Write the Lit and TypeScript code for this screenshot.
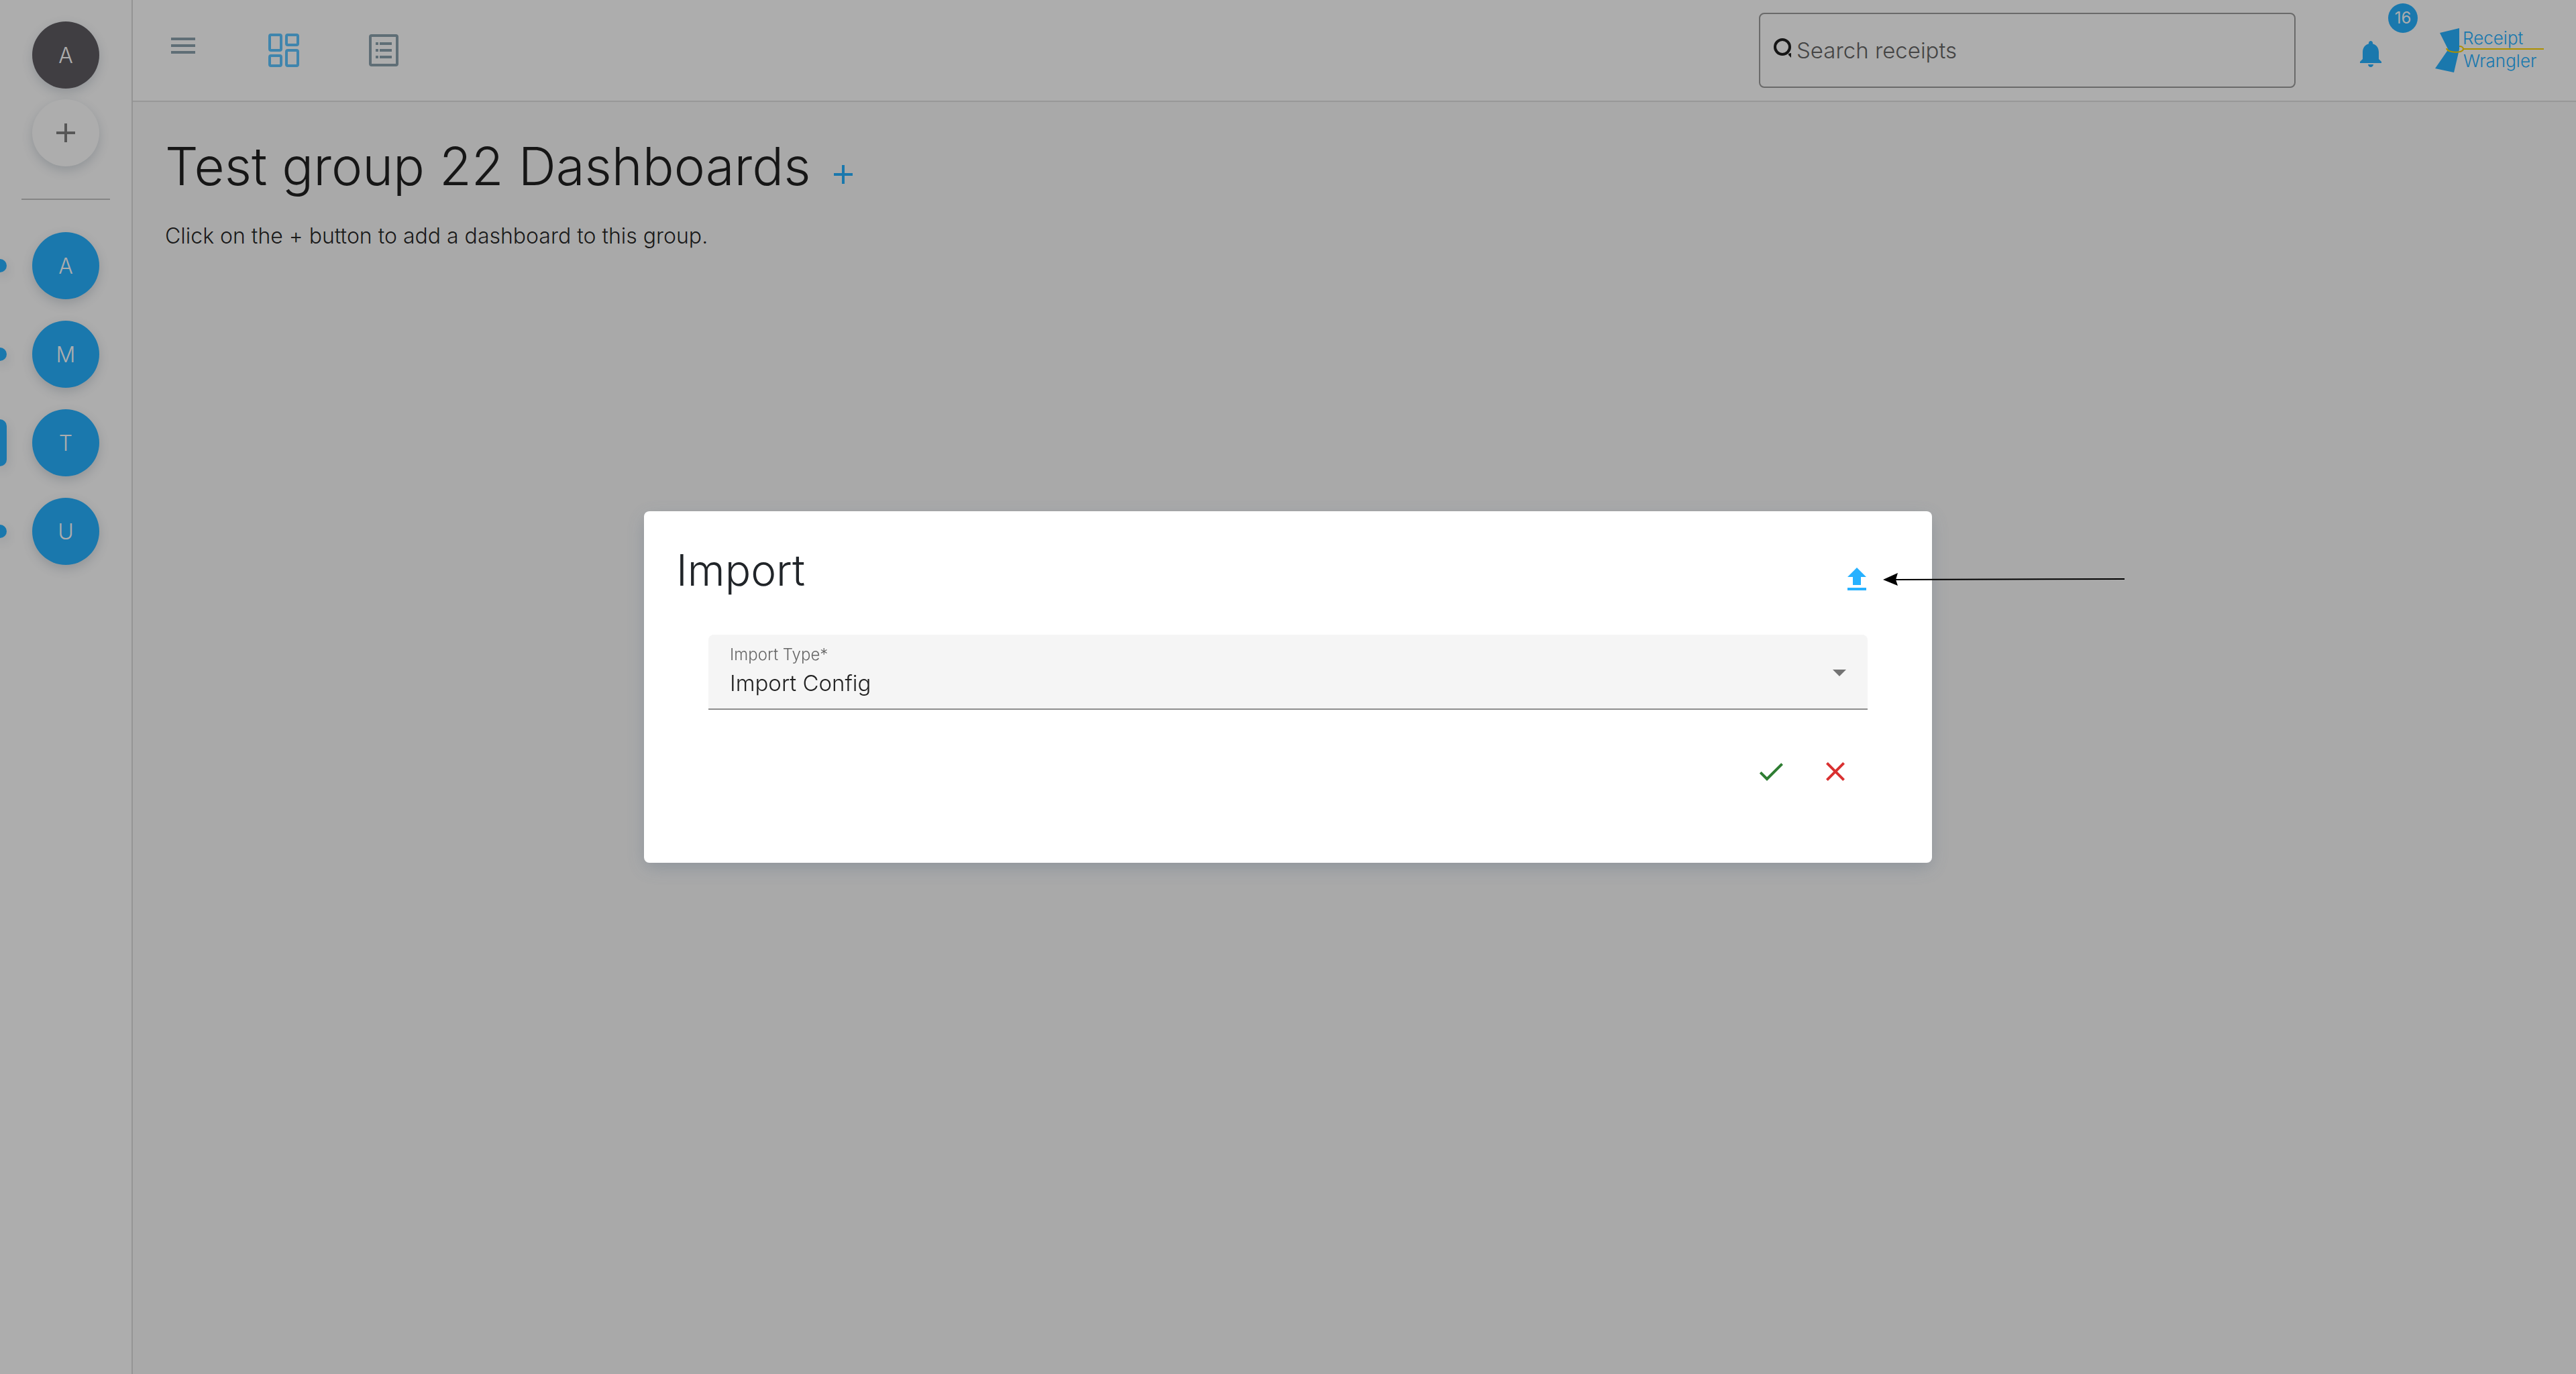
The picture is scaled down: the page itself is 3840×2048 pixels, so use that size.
import { LitElement, html, css, svg } from "lit";
import { customElement, property, state } from "lit/decorators.js";
import { classMap } from "lit/directives/class-map.js";

const paths = {
  menu: "M3 18h18v-2H3v2zm0-5h18v-2H3v2zm0-7v2h18V6H3z",
  add: "M19 13h-6v6h-2v-6H5v-2h6V5h2v6h6v2z",
  bell: "M12 22c1.1 0 2-.9 2-2h-4c0 1.1.89 2 2 2zm6-6v-5c0-3.07-1.64-5.64-4.5-6.32V4c0-.83-.67-1.5-1.5-1.5s-1.5.67-1.5 1.5v.68C7.63 5.36 6 7.92 6 11v5l-2 2v1h16v-1l-2-2z",
  upload: "M9 16h6v-6h4l-7-7-7 7h4zm-4 2h14v2H5z",
  check: "M9 16.17L4.83 12l-1.42 1.41L9 19 21 7l-1.41-1.41z",
  close: "M19 6.41L17.59 5 12 10.59 6.41 5 5 6.41 10.59 12 5 17.59 6.41 19 12 13.41 17.59 19 19 17.59 13.41 12z",
};

const icon = (name: keyof typeof paths) => html`
  <svg class="icon" viewBox="0 0 24 24" aria-hidden="true"><path fill="currentColor" d=${paths[name]}></path></svg>
`;

const base = css`
  :host {
    display: block;
    box-sizing: border-box;
    font-family: Inter, Lato, sans-serif;
    font-weight: 300;
  }
  *,
  *::before,
  *::after {
    box-sizing: border-box;
  }
  h1,
  h2,
  p,
  ul {
    margin: 0;
    padding: 0;
  }
  button {
    padding: 0;
    border: 0;
    background: none;
    color: inherit;
    font: inherit;
    cursor: pointer;
  }
  svg {
    display: block;
    flex: none;
  }
  .icon {
    width: 48px;
    height: 48px;
  }
  .icon-button {
    display: flex;
    flex: none;
    align-items: center;
    justify-content: center;
    width: 96px;
    height: 96px;
    border-radius: 50%;
    position: relative;
  }
`;

@customElement("group-rail")
export class GroupRail extends LitElement {
  @property({ attribute: false }) groups: string[] = [];
  @property() selected = "";

  static styles = [
    base,
    css`
      :host {
        width: 198px;
        border-right: 2px solid #dadada;
        background: #ffffff;
        padding-top: 32px;
      }
      .top {
        display: flex;
        flex-direction: column;
        align-items: center;
        gap: 16px;
      }
      .avatar {
        width: 100px;
        height: 100px;
        border-radius: 50%;
        display: flex;
        align-items: center;
        justify-content: center;
        font-size: 32px;
        color: #ffffff;
        background: #27b1ff;
        box-shadow: 0 6px 16px rgba(50, 75, 100, 0.2);
      }
      .user {
        background: #5f5c62;
      }
      .new {
        background: #ffffff;
        color: #808080;
      }
      .divider {
        height: 2px;
        border: 0;
        margin: 48px 32px;
        background: #c4c4c4;
      }
      .groups {
        display: flex;
        flex-direction: column;
        gap: 32px;
        list-style: none;
      }
      .group {
        display: flex;
        align-items: center;
        gap: 38px;
      }
      .marker {
        width: 10px;
        height: 20px;
        border-radius: 0 10px 10px 0;
        background: #27b1ff;
        box-shadow: 0 6px 16px rgba(50, 75, 100, 0.2);
      }
      .marker.active {
        height: 70px;
      }
    `,
  ];

  render() {
    return html`
      <div class="top">
        <button class="avatar user" aria-label="Account">A</button>
        <button class="avatar new" aria-label="Add group">${icon("add")}</button>
      </div>
      <hr class="divider" />
      <ul class="groups">
        ${this.groups.map(
          (g) => html`<li class="group">
            <span class=${classMap({ marker: true, active: g === this.selected })}></span>
            <button class="avatar" @click=${() => (this.selected = g)}>${g}</button>
          </li>`
        )}
      </ul>
    `;
  }
}

@customElement("top-bar")
export class TopBar extends LitElement {
  static styles = [
    base,
    css`
      :host {
        background: #ffffff;
        border-bottom: 2px solid #e1e1e1;
      }
      .bar {
        display: flex;
        align-items: center;
        min-height: 150px;
        padding: 0 48px 0 27px;
      }
      .nav {
        display: flex;
        align-items: center;
        gap: 54px;
        color: #8ca2ae;
      }
      .menu {
        margin-bottom: 14px;
      }
      .current {
        color: #5dc5ff;
      }
      .search {
        flex: 0 1 800px;
        min-width: 0;
        height: 112px;
        margin: 0 64px 0 auto;
        padding: 0 20px;
        border: 2px solid #9c9c9c;
        border-radius: 8px;
        display: flex;
        align-items: center;
        gap: 8px;
      }
      .query {
        flex: 1;
        min-width: 0;
        border: 0;
        outline: 0;
        padding: 0;
        background: none;
        font: inherit;
        font-size: 33px;
        color: #212121;
      }
      .query::placeholder {
        color: #656565;
      }
      .alerts {
        margin: 10px 48px 0 0;
        color: #27b1ff;
      }
      .badge {
        position: absolute;
        left: 74px;
        top: -27px;
        width: 44px;
        height: 44px;
        border-radius: 50%;
        background: #27b1ff;
        color: #ffffff;
        font-size: 24px;
        font-weight: 400;
        line-height: 44px;
        text-align: center;
      }
      .wordmark {
        font-size: 26px;
      }
    `,
  ];

  render() {
    return html`
      <header class="bar">
        <nav class="nav">
          <button class="icon-button menu" aria-label="Menu">${icon("menu")}</button>
          <button class="icon-button current" aria-label="Dashboards">
            <svg width="50" height="50" viewBox="0 0 50 50" fill="none" stroke="currentColor" stroke-width="4">
              <rect x="4" y="2" width="17" height="23" rx="2"></rect>
              <rect x="29" y="2" width="17" height="15" rx="2"></rect>
              <rect x="29" y="25" width="17" height="23" rx="2"></rect>
              <rect x="4" y="33" width="17" height="15" rx="2"></rect>
            </svg>
          </button>
          <button class="icon-button" aria-label="Receipts">
            <svg width="48" height="48" viewBox="0 0 48 48">
              <rect x="3" y="2" width="40" height="44" rx="2" fill="none" stroke="currentColor" stroke-width="4"></rect>
              ${[12, 22, 32].map((y) => svg`<path fill="currentColor" d="M11 ${y}h4v4h-4zM17 ${y}h18v4H17z"></path>`)}
            </svg>
          </button>
        </nav>
        <label class="search">
          <svg width="26" height="36" viewBox="0 0 26 36" aria-hidden="true">
            <circle cx="13" cy="13" r="11" fill="none" stroke="#212121" stroke-width="4"></circle>
            <path d="M22 23l4-1v7l-4-4z" fill="#212121"></path>
          </svg>
          <input class="query" type="search" placeholder="Search receipts" aria-label="Search receipts" />
        </label>
        <button class="icon-button alerts" aria-label="Notifications">
          ${icon("bell")}<span class="badge">16</span>
        </button>
        <svg width="162" height="66" viewBox="0 0 162 66" overflow="visible" role="img" aria-label="Receipt Wrangler">
          <path d="M7 7L36 0V31L35 36L28 66L0 60L18 34L19 31Z" fill="#27b1ff"></path>
          <path d="M17 30C18 37 42 38 42 31C42 29 40 27 36 27" fill="none" stroke="#ffd400" stroke-width="2"></path>
          <path d="M42 31H162" stroke="#ffd400" stroke-width="2"></path>
          <text class="wordmark" x="41" y="24" fill="#27b1ff">Receipt</text>
          <text class="wordmark" x="42" y="58" fill="#27b1ff">Wrangler</text>
        </svg>
      </header>
    `;
  }
}

@customElement("import-dialog")
export class ImportDialog extends LitElement {
  static styles = [
    base,
    css`
      :host {
        position: relative;
        width: 50%;
        border-radius: 8px;
        background: #ffffff;
        color: #212529;
        box-shadow: 0 8px 28px rgba(60, 85, 110, 0.25);
      }
      .head {
        display: flex;
        align-items: flex-start;
        justify-content: space-between;
        padding: 48px 64px 0 48px;
      }
      .title {
        font-size: 64px;
        line-height: 80px;
        font-weight: 300;
      }
      .upload {
        margin-top: 6px;
        color: #27b1ff;
      }
      .body {
        padding: 34px 96px 88px;
      }
      .field {
        display: flex;
        align-items: center;
        padding: 0 32px;
        border-bottom: 2px solid #8d8d8d;
        border-radius: 8px 8px 0 0;
        background: #f5f5f5;
      }
      .control {
        flex: 1;
        display: flex;
        flex-direction: column;
        gap: 4px;
        padding: 14px 0 16px;
      }
      .label {
        font-size: 24px;
        line-height: 32px;
        color: #666666;
      }
      .select {
        appearance: none;
        height: 44px;
        padding: 0;
        border: 0;
        outline: 0;
        background: none;
        font: inherit;
        font-size: 33px;
        line-height: 44px;
        color: #212121;
      }
      .actions {
        display: flex;
        justify-content: flex-end;
        margin-top: 44px;
      }
      .confirm {
        color: #2e7d32;
      }
      .cancel {
        color: #d93030;
      }
      .pointer {
        position: absolute;
        right: -287px;
        top: 91px;
        pointer-events: none;
      }
    `,
  ];

  render() {
    return html`
      <section role="dialog" aria-labelledby="title">
        <div class="head">
          <h2 class="title" id="title">Import</h2>
          <button class="icon-button upload" aria-label="Upload file">${icon("upload")}</button>
        </div>
        <form class="body" @submit=${(e: Event) => e.preventDefault()}>
          <div class="field">
            <div class="control">
              <label class="label" for="type">Import Type*</label>
              <select class="select" id="type" required>
                <option>Import Config</option>
              </select>
            </div>
            <svg width="20" height="14" viewBox="0 0 20 14" aria-hidden="true"><path d="M0 4h20L10 14z" fill="#737373"></path></svg>
          </div>
          <div class="actions">
            <button class="icon-button confirm" type="submit" aria-label="Confirm">${icon("check")}</button>
            <button class="icon-button cancel" type="button" aria-label="Cancel">${icon("close")}</button>
          </div>
        </form>
      </section>
      <svg class="pointer" width="360" height="22" viewBox="0 0 360 22" aria-hidden="true">
        <path d="M19 11L360 10" stroke="#000000" stroke-width="2"></path>
        <path d="M0 11L22 1L19 11L22 20Z" fill="#000000"></path>
      </svg>
    `;
  }
}

@customElement("app-root")
export class AppRoot extends LitElement {
  @state() private groups = ["A", "M", "T", "U"];

  static styles = [
    base,
    css`
      .shell {
        display: grid;
        grid-template-columns: auto 1fr;
        min-height: 100vh;
        background: #fafafa;
        color: rgba(0, 0, 0, 0.87);
      }
      .content {
        padding: 48px;
      }
      .heading {
        display: flex;
        align-items: flex-end;
      }
      .title {
        margin-bottom: 12px;
        font-size: 78px;
        line-height: 96px;
        font-weight: 300;
      }
      .add {
        color: #27b1ff;
      }
      .hint {
        margin-top: 20px;
        font-size: 32px;
        line-height: 48px;
      }
      .overlay {
        position: fixed;
        inset: 0;
        display: flex;
        align-items: center;
        justify-content: center;
        background: rgba(0, 0, 0, 0.32);
      }
    `,
  ];

  render() {
    return html`
      <div class="shell">
        <group-rail .groups=${this.groups} selected="T"></group-rail>
        <div>
          <top-bar></top-bar>
          <main class="content">
            <div class="heading">
              <h1 class="title">Test group 22 Dashboards</h1>
              <button class="icon-button add" aria-label="Add dashboard">${icon("add")}</button>
            </div>
            <p class="hint">Click on the + button to add a dashboard to this group.</p>
          </main>
        </div>
      </div>
      <div class="overlay"><import-dialog></import-dialog></div>
    `;
  }
}
